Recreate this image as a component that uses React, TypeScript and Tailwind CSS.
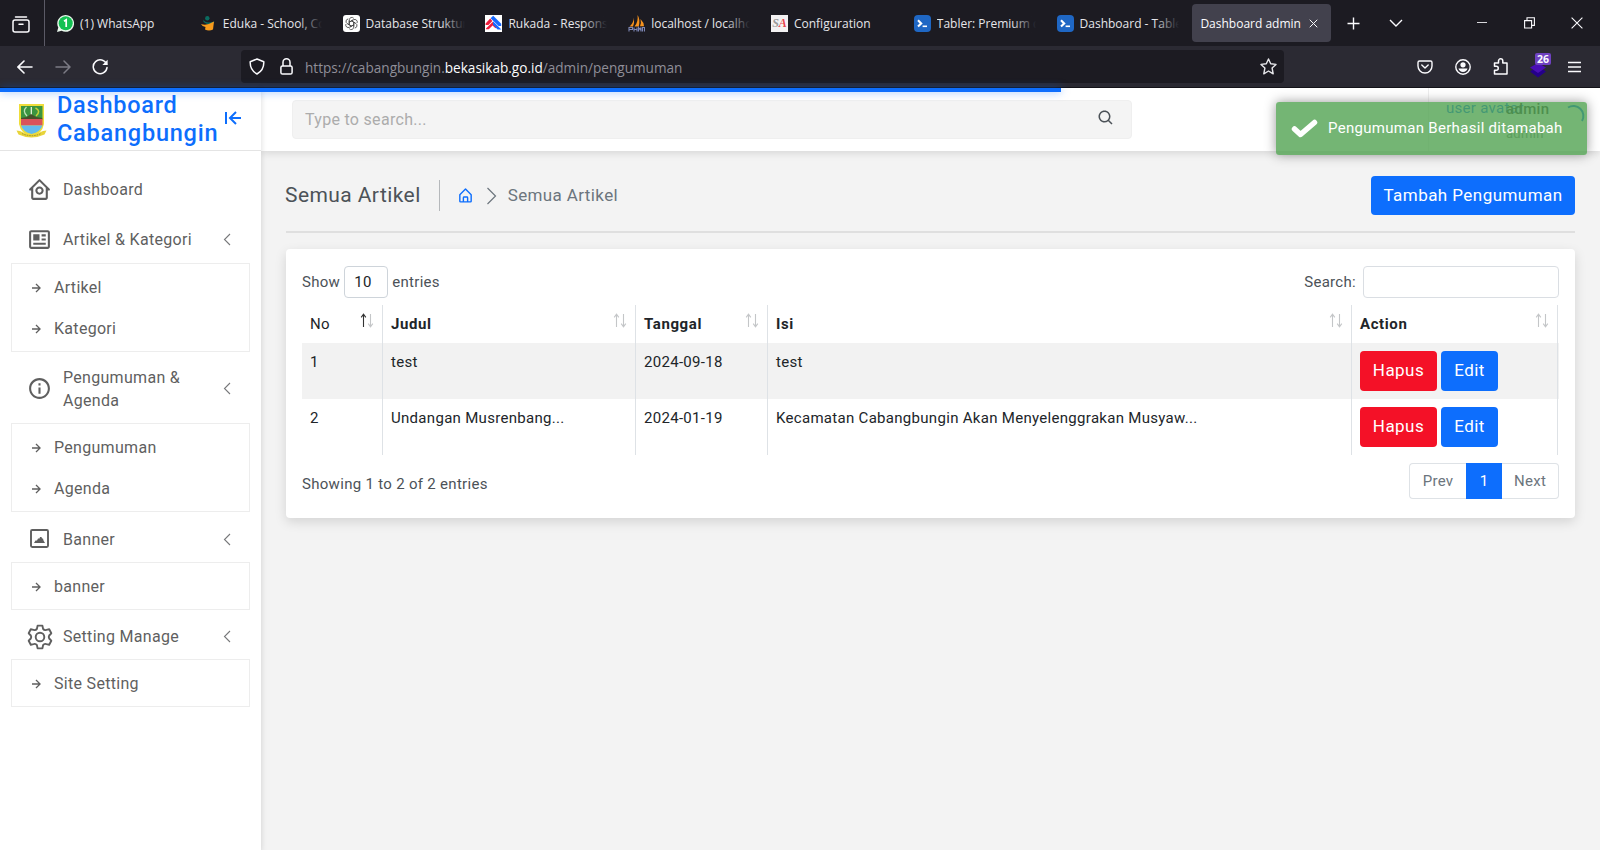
import React from "react";
import {
  BiHomeCircle,
  BiNews,
  BiInfoCircle,
  BiArrowToLeft,
  BiRightArrowAlt,
  BiSearch,
  BiHomeAlt,
} from "react-icons/bi";

type Children = { children: React.ReactNode };

function Tab({ icon, children, fade = false }: Children & { icon: React.ReactNode; fade?: boolean }) {
  return (
    <div className="flex h-full w-[142.8px] shrink-0 items-center">
      <div className="flex w-[17px] shrink-0 items-center">{icon}</div>
      <div className="relative ml-[6px] w-[99px] overflow-hidden pt-[1px] whitespace-nowrap">
        {children}
        {fade && (
          <div className="absolute inset-y-0 right-0 w-[24px] bg-gradient-to-r from-transparent to-[#1c1b22]" />
        )}
      </div>
    </div>
  );
}

function TablerLogo() {
  return (
    <svg width="17" height="17" viewBox="0 0 17 17">
      <rect width="17" height="17" rx="4" fill="#1f67c4" />
      <path d="M4 5.2 L7.2 8.4 L4 11.6" fill="none" stroke="#fff" strokeWidth="2.1" />
      <path d="M8.6 11.3 H13" stroke="#fff" strokeWidth="1.6" />
    </svg>
  );
}

function BrowserTabs() {
  return (
    <div className="flex h-[46px] items-center bg-[#1c1b22] text-[12px] text-[#e6e6ea]">
      <div className="flex h-full w-[45px] shrink-0 items-center border-r border-[#5b5a66] pt-[2px] pl-[12px]">
        <svg width="18" height="17" viewBox="0 0 18 17" fill="none" stroke="#fbfbfe" strokeWidth="1.5" strokeLinecap="round">
          <path d="M3.5 .9 H14.5" />
          <rect x="1" y="4" width="16" height="12" rx="2" />
          <path d="M7 8.2 H11" />
        </svg>
      </div>
      <div className="flex h-full items-center pl-[12px]">
        <Tab
          icon={
            <svg width="17" height="17" viewBox="0 0 17 17">
              <path d="M0 17 L1.3 12.5 A8.4 8.4 0 1 1 4.6 15.8 Z" fill="#e9f7ec" />
              <circle cx="8.7" cy="8.3" r="7" fill="#13c152" />
              <path d="M7 6.2 L9.2 4.8 V12" fill="none" stroke="#fff" strokeWidth="1.7" />
            </svg>
          }
        >
          (1) WhatsApp
        </Tab>
        <Tab
          fade
          icon={
            <svg width="17" height="17" viewBox="0 0 17 17">
              <circle cx="7.3" cy="3.2" r="2.2" fill="#0b6b60" />
              <path d="M3.5 4.5 Q5 9 14.5 6.5 L13 9 Q7 10 3.5 7 Z" fill="#0b6b60" />
              <path d="M1 9 Q7 11 14 6.6 L13 14.5 Q9 16.5 5 14.5 L5.5 12 Q2 11.5 1 9 Z" fill="#f79b1c" />
            </svg>
          }
        >
          Eduka - School, Co
        </Tab>
        <Tab
          fade
          icon={
            <svg width="17" height="17" viewBox="0 0 17 17">
              <rect width="17" height="17" rx="3" fill="#fff" />
              <g fill="none" stroke="#444" strokeWidth=".8">
                {[0, 60, 120, 180, 240, 300].map((a) => (
                  <path key={a} transform={`rotate(${a} 8.5 8.5)`} d="M6.3 9.8 V4.8 A2.5 2.5 0 0 1 10.8 3.4 M8.5 5.8 L12.3 8" />
                ))}
              </g>
            </svg>
          }
        >
          Database Struktur
        </Tab>
        <Tab
          fade
          icon={
            <svg width="17" height="17" viewBox="0 0 17 17">
              <rect width="17" height="17" fill="#fff" />
              <path d="M5.2 3.6 L7.4 6 L3.4 10 H.6 V8.6 Z M7.6 7 L12.2 11.6 L10.4 13.2 L7.6 10.6 L3.8 14.2 H1 V13.4 Z" fill="#ee1c3c" />
              <path d="M5.6 3.2 L8.2 .8 L16.2 8.8 V11 H13.6 Z M8 6.2 L16.4 14.4 H12.6 L8 9.8 Z" fill="#1769ff" />
            </svg>
          }
        >
          Rukada - Respons
        </Tab>
        <Tab
          fade
          icon={
            <svg width="17" height="17" viewBox="0 0 17 17">
              <path d="M1.5 11.5 Q5.5 8 6 2.5 Q6.5 8 5 11.5 Z M6.5 11.5 Q10.5 7 9.5 0 Q12.5 4 10.8 11.5 Z M12 11.3 Q13.5 8 12.5 4 Q16 7.5 16 11.3 Z" fill="#f7931e" />
              <path d="M1 16.5 V12.5 H4.5 V14.5 H1 M6 16.5 V12.5 M6 14.5 H9 M9 12.5 V16.5 M10.5 16.5 V12.5 L12 14.5 L13 12.5 V16.5 M14.5 16.5 V12.5 H16.5 V16.5" fill="none" stroke="#7c86b5" strokeWidth="1.1" />
            </svg>
          }
        >
          localhost / localho
        </Tab>
        <Tab
          icon={
            <span className="flex h-[17px] w-[17px] items-center justify-center bg-[#f4f2f3] font-['Liberation_Serif',serif] text-[12px] leading-none font-bold italic">
              <span className="text-[#9b9b9b]">S</span>
              <span className="text-[#e8434d]">A</span>
            </span>
          }
        >
          Configuration
        </Tab>
        <Tab fade icon={<TablerLogo />}>Tabler: Premium d</Tab>
        <Tab fade icon={<TablerLogo />}>Dashboard - Table</Tab>
      </div>
      <div className="-ml-[7px] flex h-[38px] w-[139px] shrink-0 items-center rounded-[4px] bg-[#42414d] pl-[8px] text-[#fbfbfe]">
        <span className="w-[104px] pt-[1px] whitespace-nowrap">Dashboard admin</span>
        <svg className="ml-[5px]" width="9" height="9" viewBox="0 0 10 10" stroke="#fbfbfe" strokeWidth="1.1">
          <path d="M.8 .8 L9.2 9.2 M9.2 .8 L.8 9.2" />
        </svg>
      </div>
      <svg className="mt-[1px] ml-[16px] shrink-0" width="13" height="13" viewBox="0 0 13 13" stroke="#fbfbfe" strokeWidth="1.4">
        <path d="M6.5 .5 V12.5 M.5 6.5 H12.5" />
      </svg>
      <svg className="ml-[29px] shrink-0" width="14" height="8" viewBox="0 0 14 8" fill="none" stroke="#fbfbfe" strokeWidth="1.4">
        <path d="M1 1 L7 7 L13 1" />
      </svg>
      <svg className="ml-[74px] shrink-0" width="10" height="2" viewBox="0 0 10 2">
        <rect width="10" height="1" fill="#d8d8dc" />
      </svg>
      <svg className="ml-[37px] shrink-0" width="11" height="12" viewBox="0 0 11 12" fill="none" stroke="#fbfbfe" strokeWidth="1.1">
        <path d="M.6 3.6 H7.6 V11 H.6 Z M3 3.4 V.8 H10.4 V8.4 H7.8" />
      </svg>
      <svg className="ml-[36px] shrink-0" width="12" height="12" viewBox="0 0 12 12" stroke="#fbfbfe" strokeWidth="1.1">
        <path d="M.6 .6 L11.4 11.4 M11.4 .6 L.6 11.4" />
      </svg>
    </div>
  );
}

function AddressBar() {
  return (
    <div className="flex h-[42px] items-center border-b border-[#15141a] bg-[#2b2a33] text-[#fbfbfe]">
      <svg className="ml-[17px]" width="16" height="14" viewBox="0 0 16 14" fill="none" stroke="#fbfbfe" strokeWidth="1.6" strokeLinecap="round">
        <path d="M1 7 H15 M7 1 L1 7 L7 13" />
      </svg>
      <svg className="ml-[22px]" width="16" height="14" viewBox="0 0 16 14" fill="none" stroke="#7c7b85" strokeWidth="1.5" strokeLinecap="round">
        <path d="M1 7 H15 M9 1 L15 7 L9 13" />
      </svg>
      <svg className="ml-[21px]" width="17" height="16" viewBox="0 0 17 16" fill="none" stroke="#fbfbfe" strokeWidth="1.5" strokeLinecap="round">
        <path d="M14.6 5.3 A6.9 6.9 0 1 0 15 8.6" />
        <path d="M15.6 .8 V6 H10.4 Z" fill="#fbfbfe" stroke="none" />
      </svg>
      <div className="ml-[132px] flex h-[33px] w-[1043px] items-center rounded-[4px] bg-[#1c1b22]">
        <svg className="ml-[8px]" width="16" height="17" viewBox="0 0 16 17" fill="none" stroke="#fbfbfe" strokeWidth="1.5" strokeLinejoin="round">
          <path d="M8 1 L14.8 3.8 C15 9 12.5 13.5 8 16 C3.5 13.5 1 9 1.2 3.8 Z" />
        </svg>
        <svg className="ml-[15px]" width="13" height="17" viewBox="0 0 13 17" fill="none" stroke="#fbfbfe" strokeWidth="1.5">
          <rect x=".9" y="8" width="11.2" height="8" rx="1.6" />
          <path d="M3 8 V4.3 A3.5 3.5 0 0 1 10 4.3 V8" />
        </svg>
        <span className="ml-[12px] pt-[3px] text-[13.6px] whitespace-nowrap text-[#8f8e98]">
          https://cabangbungin.<span className="text-[#fbfbfe]">bekasikab.go.id</span>/admin/pengumuman
        </span>
        <svg className="mr-[7px] ml-auto" width="17" height="17" viewBox="0 0 17 17" fill="none" stroke="#e6e6ea" strokeWidth="1.4" strokeLinejoin="round">
          <path d="M8.5 1 L10.7 5.8 L16 6.4 L12.1 10 L13.2 15.8 L8.5 13 L3.8 15.8 L4.9 10 L1 6.4 L6.3 5.8 Z" />
        </svg>
      </div>
      <svg className="ml-[133px]" width="16" height="14" viewBox="0 0 16 14" fill="none" stroke="#fbfbfe" strokeWidth="1.4" strokeLinecap="round" strokeLinejoin="round">
        <path d="M2.5 1 H13.5 A1.5 1.5 0 0 1 15 2.5 V6 A7 7 0 0 1 1 6 V2.5 A1.5 1.5 0 0 1 2.5 1 Z M4.8 5 L8 8 L11.2 5" />
      </svg>
      <svg className="ml-[22px]" width="16" height="16" viewBox="0 0 16 16">
        <circle cx="8" cy="8" r="7.2" fill="none" stroke="#fbfbfe" strokeWidth="1.4" />
        <circle cx="8" cy="5.8" r="2.6" fill="#fbfbfe" />
        <path d="M3.5 9.6 H12.5 Q11.5 13 8 13 Q4.5 13 3.5 9.6 Z" fill="#fbfbfe" />
      </svg>
      <svg className="ml-[22px]" width="16" height="17" viewBox="0 0 16 17" fill="none" stroke="#fbfbfe" strokeWidth="1.5" strokeLinejoin="round">
        <path d="M1.5 16 V12.2 H3.3 A1.8 1.8 0 0 0 3.3 8.3 H1.5 V5 H5.5 V3 A2 2 0 0 1 9.8 3 V5 H14 V16 Z" />
      </svg>
      <div className="relative ml-[20px] h-[24px] w-[22px]">
        <svg className="absolute top-[8px] left-0" width="18" height="15" viewBox="0 0 18 15">
          <path d="M1 8.5 L9 3 L17 8.5 L9 14.5 Z" fill="#25008a" />
          <path d="M1 4.5 L9 0 L17 4.5 L9 10 Z" fill="#4a0fb5" />
        </svg>
        <span className="absolute -top-[2px] left-[6px] h-[12px] w-[16px] rounded-[2px] bg-[#6f42c1] text-center text-[10.5px] leading-[12px] font-bold">
          26
        </span>
      </div>
      <svg className="ml-[17px]" width="13" height="12" viewBox="0 0 13 12" stroke="#fbfbfe" strokeWidth="1.3">
        <path d="M0 1.5 H13 M0 6 H13 M0 10.5 H13" />
      </svg>
    </div>
  );
}

function Crest() {
  return (
    <svg className="mt-[2px] shrink-0" width="31" height="35" viewBox="0 0 31 35">
      <path d="M3 1 H28 V21 Q26 31 15.500 34 Q5 31 3 21 Z" fill="#efdd3a" />
      <path d="M5 3 H26.500 V15 H5 Z" fill="#3b9440" />
      <path d="M10.500 4 Q6 8 11 13" fill="none" stroke="#bfe3b6" strokeWidth="1.300" />
      <path d="M19.500 5 Q25.500 8 20 13" fill="none" stroke="#c8d13a" strokeWidth="1.500" />
      <path d="M15.300 4 V12" stroke="#f4f7e6" strokeWidth="1.200" />
      <path d="M5 15 L11 14 L15 11 L20 14 L26.500 15 V16.500 H5 Z" fill="#47512a" />
      <path d="M5 16 H26.500 V22.500 H5 Z" fill="#d9535a" />
      <path d="M5 22.500 H26.500 Q24.500 29 15.500 31 Q7 29 5 22.500 Z" fill="#62bbee" />
      <path d="M.5 27.500 L4 28 Q15 35 27 28 L30.500 27.500 L28.500 31.500 Q15.500 37.500 2.500 31.500 Z" fill="#e8d43a" />
      <path d="M6 30.600 Q15.500 34.800 25 30.600" fill="none" stroke="#9a8c2a" strokeWidth=".9" strokeDasharray="1.500 1" />
    </svg>
  );
}

function Gear() {
  return (
    <svg className="shrink-0" width="26" height="26" viewBox="0 0 26 26" fill="none" stroke="currentColor" strokeWidth="1.9" strokeLinejoin="round">
      <circle cx="13" cy="13" r="4.3" />
      <path d="M10.6 1.600 H15.400 L16.100 4.900 Q17.300 6.700 19.400 5.900 L22.200 5.300 L24.300 9.300 L22.200 11.500 Q21.300 13 22.200 14.500 L24.300 16.700 L22.200 20.700 L19.400 20.100 Q17.300 19.300 16.100 21.100 L15.400 24.400 H10.600 L9.900 21.100 Q8.700 19.300 6.600 20.100 L3.800 20.700 L1.700 16.700 L3.800 14.500 Q4.700 13 3.800 11.500 L1.700 9.300 L3.800 5.300 L6.600 5.900 Q8.700 6.700 9.900 4.900 Z" />
    </svg>
  );
}

function MenuItem({
  icon,
  label,
  className,
  arrow = true,
}: {
  icon: React.ReactNode;
  label: React.ReactNode;
  className: string;
  arrow?: boolean;
}) {
  return (
    <div className={`flex items-center pr-[30px] pl-[27px] ${className}`}>
      <div className="flex w-[25px] shrink-0 justify-center">{icon}</div>
      <div className="ml-[11px] flex-1 text-[16px] leading-[23px]">{label}</div>
      {arrow && (
        <svg width="8" height="13" viewBox="0 0 8 13" fill="none" stroke="#77787a" strokeWidth="1.1">
          <path d="M7 1 L1.5 6.5 L7 12" />
        </svg>
      )}
    </div>
  );
}

function SubMenu({ items }: { items: string[] }) {
  return (
    <div className="mx-[11px] border border-[#ededed] px-[16px] pt-[3px] pb-[2px]">
      {items.map((t) => (
        <div key={t} className="flex h-[41px] items-center text-[16px]">
          <BiRightArrowAlt className="h-[16px] w-[16px]" />
          <span className="ml-[10px]">{t}</span>
        </div>
      ))}
    </div>
  );
}

function Sidebar() {
  return (
    <aside className="z-10 flex w-[261px] shrink-0 flex-col bg-white tracking-[0.3px] text-[#5f5f5f] shadow-[0_2px_6px_rgba(0,0,0,0.15)]">
      <div className="flex h-[63px] shrink-0 items-center border-b border-[#e4e4e4] pl-[16px]">
        <Crest />
        <div className="ml-[10px] w-[160px] pt-[1px] text-[23.5px] leading-[27.5px] font-medium tracking-[0.77px] text-[#0d6efd]">
          Dashboard
          <br />
          Cabangbungin
        </div>
        <BiArrowToLeft className="mb-[2px] ml-[4px] h-[24px] w-[24px] text-[#0d6efd]" />
      </div>
      <nav className="flex flex-col pt-[13px]">
        <MenuItem className="h-[50px]" arrow={false} icon={<BiHomeCircle className="h-[25px] w-[25px]" />} label="Dashboard" />
        <MenuItem className="h-[49px] pt-[2px]" icon={<BiNews className="h-[25px] w-[25px]" />} label="Artikel & Kategori" />
        <SubMenu items={["Artikel", "Kategori"]} />
        <MenuItem
          className="h-[71px] pt-[2px]"
          icon={<BiInfoCircle className="h-[25px] w-[25px]" />}
          label={
            <>
              Pengumuman &<br />
              Agenda
            </>
          }
        />
        <SubMenu items={["Pengumuman", "Agenda"]} />
        <MenuItem
          className="h-[50px] pt-[4px]"
          icon={
            <svg className="mb-[2px]" width="19" height="19" viewBox="0 0 19 19">
              <rect x="1" y="1" width="17" height="17" rx="1.2" fill="none" stroke="currentColor" strokeWidth="1.9" />
              <path d="M4 14 L5.500 11.500 L7 11.500 L8 9.500 L9.500 9.500 L10 8 L11.500 8 L12 9.500 L13 9.500 L13.500 11.500 L15 14 Z" fill="currentColor" />
            </svg>
          }
          label="Banner"
        />
        <SubMenu items={["banner"]} />
        <MenuItem className="h-[49px] pt-[4px]" icon={<Gear />} label="Setting Manage" />
        <SubMenu items={["Site Setting"]} />
      </nav>
    </aside>
  );
}

function Topbar() {
  return (
    <header className="relative flex h-[63px] shrink-0 items-center bg-white pl-[31px] tracking-[0.3px] shadow-[0_2px_8px_rgba(0,0,0,0.12)]">
      <div className="flex h-[39px] w-[840px] items-center rounded-[4px] border border-[#efefef] bg-[#f4f4f4] pr-[16px] pl-[12px] text-[16px] text-[#acacac]">
        Type to search...
        <BiSearch className="mb-[3px] ml-auto h-[18px] w-[18px] text-[#4c5258]" />
      </div>
      <div className="absolute top-0 right-0 h-[63px] w-[172px] border-l border-[#ededed] text-[15px] leading-[20px]">
        <span className="absolute top-[10px] left-[17px] whitespace-nowrap text-[#0d6efd]">user avatar</span>
        <span className="absolute top-[11px] left-[77px] font-medium text-[#413c3c]">admin</span>
        <span className="absolute top-[36px] left-[77px] text-[13px] text-[#8a8a8a]">admin</span>
        <svg className="absolute top-[16px] left-[137px]" width="20" height="20" viewBox="0 0 20 20" fill="none" stroke="#0d6efd" strokeWidth="2">
          <path d="M2 3.5 A10 10 0 0 1 16 17" />
        </svg>
      </div>
      <div className="absolute top-[14px] right-[13px] flex h-[53px] w-[311px] items-center rounded-[3px] bg-[#51a351]/80 pl-[15px] text-[15px] text-white shadow-[0_0_12px_#999]">
        <svg width="27" height="21" viewBox="0 0 27 21" fill="none" stroke="#fff" strokeWidth="5.5">
          <path d="M3.5 11 L9.5 16.5 L23.500 4.500" strokeLinejoin="round" strokeLinecap="round" />
        </svg>
        <span className="ml-[10px] whitespace-nowrap">Pengumuman Berhasil ditamabah</span>
      </div>
    </header>
  );
}

function SortArrows({ active = false }: { active?: boolean }) {
  return (
    <svg className="absolute top-[8px] right-[8px]" width="14" height="15" viewBox="0 0 14 15" fill="none" strokeWidth="1.1">
      <path d="M3.5 14 V1.5 M1.2 4.3 L3.5 1.2 L5.8 4.3" stroke={active ? "#333" : "#c4c6c8"} />
      <path d="M10.5 1 V13.5 M8.2 10.7 L10.5 13.8 L12.8 10.7" stroke="#c4c6c8" />
    </svg>
  );
}

function Th({ children, active }: Children & { active?: boolean }) {
  return (
    <div className={`relative flex items-center border-r border-[#dee2e6] pl-[8px] ${active ? "" : "font-bold tracking-[0.6px]"}`}>
      {children}
      <SortArrows active={active} />
    </div>
  );
}

function Td({ children }: Children) {
  return <div className="border-r border-[#dee2e6] pt-[8px] pl-[8px] leading-[23px]">{children}</div>;
}

const rows = [
  ["1", "test", "2024-09-18", "test"],
  ["2", "Undangan Musrenbang...", "2024-01-19", "Kecamatan Cabangbungin Akan Menyelenggrakan Musyaw..."],
];

const cols = "grid grid-cols-[81px_253px_132px_584px_206px]";

function DataCard() {
  return (
    <section className="mx-[25px] mt-[16px] h-[269px] w-[1289px] rounded-[4px] bg-white px-[16px] pt-[17px] text-[15px] tracking-[0.3px] text-[#4c5258] shadow-[0_4px_12px_rgba(0,0,0,0.13)]">
      <div className="flex h-[32px] items-center">
        Show
        <span className="mx-[4px] flex h-[32px] w-[44px] items-center rounded-[4px] border border-[#ced4da] pl-[9px] text-[#212529]">10</span>
        entries
        <span className="ml-auto">Search:</span>
        <span className="ml-[7px] h-[32px] w-[196px] rounded-[4px] border border-[#dadee3]" />
      </div>
      <div className="mt-[7px] text-[#212529]">
        <div className={`${cols} h-[38px]`}>
          <Th active>No</Th>
          <Th>Judul</Th>
          <Th>Tanggal</Th>
          <Th>Isi</Th>
          <Th>Action</Th>
        </div>
        {rows.map((r, i) => (
          <div key={r[0]} className={`${cols} h-[56px] ${i === 0 ? "bg-[#f2f2f2]" : ""}`}>
            {r.map((c, j) => (
              <Td key={j}>{c}</Td>
            ))}
            <div className="flex gap-[4px] border-r border-[#dee2e6] pt-[8px] pl-[8px] text-[17px] tracking-[0.45px] text-white">
              <span className="flex h-[40px] w-[77px] items-center justify-center rounded-[4px] bg-[#f41127]">Hapus</span>
              <span className="flex h-[40px] w-[57px] items-center justify-center rounded-[4px] bg-[#0d6efd]">Edit</span>
            </div>
          </div>
        ))}
      </div>
      <div className="mt-[8px] flex h-[36px] justify-between">
        <span className="mt-[10px]">Showing 1 to 2 of 2 entries</span>
        <div className="flex h-[36px] rounded-[4px] text-[#6c757d]">
          <span className="flex w-[57px] items-center justify-center rounded-l-[4px] border border-r-0 border-[#dee2e6]">Prev</span>
          <span className="flex w-[36px] items-center justify-center bg-[#0d6efd] text-white">1</span>
          <span className="flex w-[57px] items-center justify-center rounded-r-[4px] border border-l-0 border-[#dee2e6]">Next</span>
        </div>
      </div>
    </section>
  );
}

export default function App() {
  return (
    <div className="flex h-[850px] w-[1600px] flex-col overflow-hidden font-['Open_Sans',sans-serif]">
      <BrowserTabs />
      <AddressBar />
      <div className="relative flex min-h-0 flex-1 bg-[#f3f3f3] font-['Roboto',sans-serif]">
        <div className="absolute top-0 left-0 z-20 h-[4px] w-[1061px] bg-[#0d6efd] shadow-[0_0_8px_rgba(13,110,253,0.5)]" />
        <Sidebar />
        <main className="flex min-w-0 flex-1 flex-col">
          <Topbar />
          <div className="mr-[25px] ml-[24px] mt-[25px] flex h-[39px] items-center">
            <h1 className="text-[21px] tracking-[0.42px] text-[#4c5258]">Semua Artikel</h1>
            <div className="ml-[18px] h-[31px] w-px bg-[#b5b8bb]" />
            <BiHomeAlt className="ml-[17px] h-[17px] w-[17px] text-[#0d6efd]" />
            <svg className="ml-[12px]" width="11" height="18" viewBox="0 0 11 18" fill="none" stroke="#6c757d" strokeWidth="1.2">
              <path d="M1.5 1 L9.5 9 L1.5 17" />
            </svg>
            <span className="ml-[11px] text-[17px] tracking-[0.38px] text-[#6c757d]">Semua Artikel</span>
            <span className="ml-auto flex h-[39px] w-[204px] items-center justify-center rounded-[4px] bg-[#0d6efd] text-[17px] tracking-[0.45px] text-white">
              Tambah Pengumuman
            </span>
          </div>
          <div className="mr-[25px] ml-[25px] mt-[16px] h-[2px] bg-[#dfdfdf]" />
          <DataCard />
        </main>
      </div>
    </div>
  );
}
